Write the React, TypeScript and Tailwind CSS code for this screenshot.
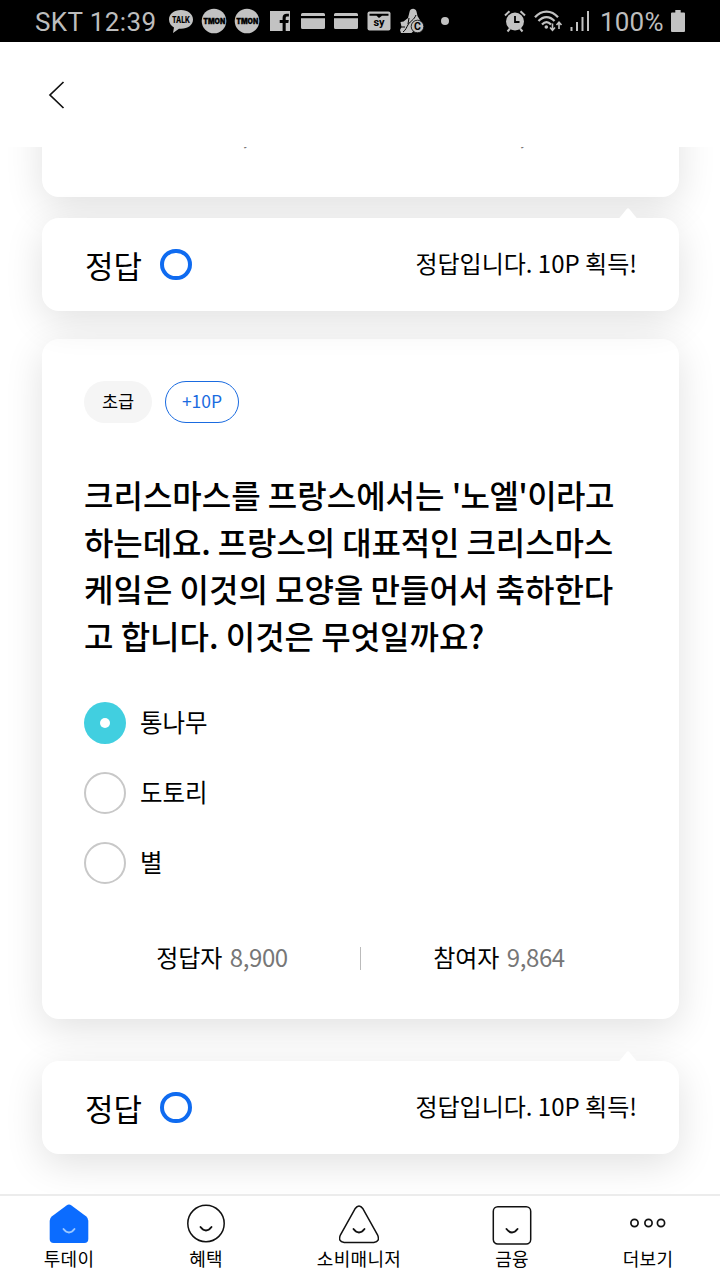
import React from 'react';

const Slot: React.FC<{ children: React.ReactNode }> = ({ children }) => (
  <span className="w-[33px] h-[42px] flex items-center justify-center shrink-0">{children}</span>
);

const TmonIcon = () => (
  <svg width="26" height="26" viewBox="0 0 26 26" className="overflow-visible">
    <circle cx="13" cy="13" r="12.3" fill="#c2c2c2" />
    <text x="2.200" y="16" textLength="22" lengthAdjust="spacingAndGlyphs" fontSize="7.500" fontWeight="900" fontFamily="Inter, sans-serif" fill="#000" stroke="#000" strokeWidth="0.300">
      TMON
    </text>
  </svg>
);

const CardIcon = () => (
  <svg width="24" height="18" viewBox="0 0 24 18">
    <path d="M1.500 1h21a1.500 1.500 0 0 1 1.500 1.500V4H0V2.500A1.500 1.500 0 0 1 1.500 1zM0 6.300h24v9.200a1.500 1.500 0 0 1-1.500 1.500h-21A1.500 1.500 0 0 1 0 15.500z" fill="#c2c2c2" />
  </svg>
);

const StatusBar = () => (
  <div className="h-[42px] shrink-0 bg-black text-[#bdbdbd] flex items-center font-[Roboto,sans-serif] text-[26px]">
    <span className="pl-[35px] w-[164px] shrink-0 whitespace-nowrap leading-[42px] pt-[2px] tracking-[0.4px]">SKT 12:39</span>
    <Slot>
      <svg width="26" height="26" viewBox="0 0 26 26" className="overflow-visible">
        <path d="M13 2C6 2 1 6 1 11.500c0 3.500 2 6.500 5 8L5 25l6-4.200h2c7 0 12-4 12-9.300S20 2 13 2z" fill="#c2c2c2" />
        <text x="4" y="14.800" textLength="18" lengthAdjust="spacingAndGlyphs" fontSize="8.500" fontWeight="800" fontFamily="Inter, sans-serif" fill="#000">
          TALK
        </text>
      </svg>
    </Slot>
    <Slot><TmonIcon /></Slot>
    <Slot><TmonIcon /></Slot>
    <Slot>
      <svg width="20" height="20" viewBox="0 0 20 20">
        <path d="M0 0h20v20h-4.300v-8h2.600l.5-3h-3.100V7.200c0-1 .4-1.600 1.700-1.600h1.500V2.800c-.4 0-1.300-.1-2.200-.1-2.600 0-4.100 1.400-4.100 4.100V9H9.700v3h2.900v8H0z" fill="#c2c2c2" />
      </svg>
    </Slot>
    <Slot><CardIcon /></Slot>
    <Slot><CardIcon /></Slot>
    <Slot>
      <svg width="24" height="20" viewBox="0 0 24 20" className="overflow-visible">
        <rect x="0.500" y="0.500" width="23" height="19" rx="2" fill="#c2c2c2" />
        <path d="M2.500 2.800h19v2h-6.500L12 7 9.500 4.800h-7z" fill="#000" />
        <text x="12" y="15" textAnchor="middle" fontSize="11" fontWeight="700" fontFamily="Roboto, sans-serif" fill="#000">
          sy
        </text>
      </svg>
    </Slot>
    <Slot>
      <svg width="26" height="26" viewBox="0 0 26 26" className="overflow-visible">
        <path d="M10.500 4c.5-4 6-4.500 7-.500l1 4.500 3 5-7 10-2 2H2l-1-3 1.500-3L1.500 14l3-.500L9 10z" fill="#c2c2c2" />
        <path d="M17 7c-2 5-5.500 6-7.500 9S7 22 4 24M10 10l-1 6M2 19l4 0" fill="none" stroke="#000" strokeWidth="1" />
        <circle cx="18.500" cy="18.500" r="6.300" fill="#c2c2c2" stroke="#000" strokeWidth="0.800" />
        <text x="18.500" y="22.300" textAnchor="middle" fontSize="10.500" fontWeight="700" fontFamily="Roboto, sans-serif" fill="#000">
          C
        </text>
      </svg>
    </Slot>
    <Slot>
      <span className="size-2 rounded-full bg-[#c2c2c2]" />
    </Slot>

    <div className="ml-auto pr-[35px] flex items-center">
      <svg width="24" height="24" viewBox="0 0 24 24" className="mr-[7px]">
        <circle cx="12" cy="12.500" r="9" fill="#c2c2c2" />
        <path d="M2 6.500 6.500 2.200M22 6.500l-4.500-4.300M4.500 22.500 7 19.500M19.500 22.500 17 19.500" stroke="#c2c2c2" strokeWidth="2" />
        <path d="M12 7v6h4.500" fill="none" stroke="#000" strokeWidth="1.800" />
      </svg>
      <svg width="30" height="24" viewBox="0 0 30 24" className="mr-[6px]">
        <g fill="none" stroke="#c2c2c2" strokeWidth="2.200">
          <path d="M1 8.200c6.500-7.500 16.500-7.500 23 0" />
          <path d="M4.500 12c4.800-5.200 11.200-5.200 16 0" />
          <path d="M8 15.500c3-3.200 6-3.200 9 0" />
          <path d="M18.500 14.500v6.500M16 18.500l2.500 2.700 2.500-2.700M25 20v-6.500M22.500 16l2.500-2.700 2.500 2.700" strokeWidth="1.600" />
        </g>
        <circle cx="12.300" cy="18" r="1.800" fill="#c2c2c2" />
      </svg>
      <svg width="20" height="22" viewBox="0 0 20 22" className="mr-[10px]">
        <path d="M0.500 17h2v4h-2zM6 12h2v9H6zM11.500 7h2v14h-2zM17 1h2v20h-2z" fill="#c2c2c2" />
      </svg>
      <span className="leading-[42px] pt-[2px] w-[71px] whitespace-nowrap tracking-[0.2px]">100%</span>
      <svg width="14" height="22" viewBox="0 0 14 22">
        <path d="M4.300 0h5.400v2.500H13a1 1 0 0 1 1 1V21a1 1 0 0 1-1 1H1a1 1 0 0 1-1-1V3.500a1 1 0 0 1 1-1h3.300z" fill="#c2c2c2" />
      </svg>
    </div>
  </div>
);

// Winner / participant counts shown at the foot of each quiz card
const Stats: React.FC<{ correct: string; total: string }> = ({ correct, total }) => (
  <div className="flex items-end h-9 text-[24px] leading-9 shrink-0">
    <div className="flex-1 text-center pb-px">
      정답자 <span className="ml-[2px] text-[#777] tracking-[-0.4px]">{correct}</span>
    </div>
    <div className="w-px h-[23px] mb-[6px] bg-[#bbb]" />
    <div className="flex-1 text-center pb-px">
      참여자 <span className="ml-[2px] text-[#777] tracking-[-0.4px]">{total}</span>
    </div>
  </div>
);

const AnswerCard = () => (
  <div className="relative h-[93px] shrink-0 rounded-[17px] bg-white shadow-[0_10px_38px_rgba(0,0,0,0.12)] flex items-center justify-between px-[42px]">
    <svg width="20" height="11" viewBox="0 0 20 11" className="absolute -top-[10px] right-[41px]">
      <path d="M0.500 11 8.500 1.200q1.500-1.800 3 0L19.500 11z" fill="#fff" />
    </svg>
    <div className="flex items-center">
      <span className="text-[31px] leading-[46px] w-[76px] pl-px">정답</span>
      <span className="w-8 h-[31px] rounded-full border-4 border-[#0f6bf0]" />
    </div>
    <span className="text-[24px] leading-9 pb-[3px] whitespace-nowrap">정답입니다. 10P 획득!</span>
  </div>
);

const options = [
  { label: '통나무', checked: true },
  { label: '도토리', checked: false },
  { label: '별', checked: false },
];

const Smile: React.FC<{ y: number; color?: string }> = ({ y, color = '#111' }) => (
  <path d={`M14.500 ${y}q5.500 7 11 0`} fill="none" stroke={color} strokeWidth="1.900" strokeLinecap="round" />
);

const tabs = [
  {
    label: '투데이',
    width: 'w-[138px]',
    icon: (
      <>
        <path d="M17.500 2.500q2.500-1.800 5 0L37 13.300q2.300 1.800 2.300 4.500V36q0 4-4 4H4.700q-4 0-4-4V17.800q0-2.700 2.300-4.500z" fill="#0b6cff" />
        <Smile y={26} color="#9cc8ff" />
      </>
    ),
  },
  {
    label: '혜택',
    width: 'w-[136px]',
    icon: (
      <>
        <circle cx="20" cy="20.500" r="18.200" fill="none" stroke="#111" strokeWidth="1.500" />
        <Smile y={24} />
      </>
    ),
  },
  {
    label: '소비매니저',
    width: 'w-[170px]',
    icon: (
      <>
        <path d="M16 5.800q4-5.700 8 0l14.500 26q3 6.800-3.700 7.800H5.200q-6.700-1-3.700-7.800z" fill="none" stroke="#111" strokeWidth="1.500" />
        <Smile y={26} />
      </>
    ),
  },
  {
    label: '금융',
    width: 'w-[136px]',
    icon: (
      <>
        <rect x="1.300" y="3.700" width="37.400" height="37.400" rx="4.500" fill="none" stroke="#111" strokeWidth="1.500" />
        <Smile y={26} />
      </>
    ),
  },
  {
    label: '더보기',
    width: 'w-[136px]',
    icon: (
      <g fill="none" stroke="#111" strokeWidth="1.700">
        <circle cx="6.500" cy="20" r="3.600" />
        <circle cx="20.500" cy="20" r="3.600" />
        <circle cx="33" cy="20" r="3.600" />
      </g>
    ),
  },
];

export default function App() {
  return (
    <div className="w-[720px] h-[1280px] overflow-hidden flex flex-col bg-white text-black font-['Noto_Sans_CJK_KR',sans-serif]">
      <StatusBar />

      <header className="h-[105px] shrink-0 flex items-center pl-12">
        <svg width="18" height="30" viewBox="0 0 18 30" fill="none" stroke="#111" strokeWidth="1.700">
          <path d="M15.500 2 2 15l13.500 13" />
        </svg>
      </header>

      <main className="h-[1047px] shrink-0 overflow-hidden flex flex-col pl-[42px] pr-[41px]">
        {/* Previous question, scrolled out except for its foot */}
        <div className="-mt-[100px] h-[150px] shrink-0 rounded-[17px] bg-white shadow-[0_10px_38px_rgba(0,0,0,0.12)] flex flex-col justify-end px-[42px] pb-[44px] mb-[21px]">
          <Stats correct="8,900" total="9,864" />
        </div>

        <AnswerCard />

        <section className="mt-7 mb-[42px] h-[680px] shrink-0 rounded-[17px] bg-white shadow-[0_10px_38px_rgba(0,0,0,0.12)] flex flex-col px-[42px] pt-[42px] pb-[43px]">
          <div className="flex gap-[13px] text-[17.500px]">
            <span className="w-[68px] h-[42px] pb-[2px] rounded-full bg-[#f5f5f5] flex items-center justify-center">초급</span>
            <span className="w-[74px] h-[42px] pb-[2px] rounded-full border border-[#1a6be0] text-[#1a6be0] flex items-center justify-center">
              +10P
            </span>
          </div>

          <h1 className="mt-[48px] text-[32px] leading-[47px] font-medium whitespace-nowrap">
            크리스마스를 프랑스에서는 <span className="tracking-[-0.600px]">'노엘'이라고</span>
            <br />
            <span className="tracking-[-0.120px]">하는데요. 프랑스의 대표적인 크리스마스</span>
            <br />
            케잌은 이것의 모양을 만들어서 축하한다
            <br />
            고 합니다. 이것은 무엇일까요?
          </h1>

          <ul className="mt-[43px] flex flex-col gap-7">
            {options.map((option) => (
              <li key={option.label} className="flex items-center gap-[14px] h-[42px] text-[24.500px]">
                {option.checked ? (
                  <span className="size-[42px] rounded-full bg-[#41cfe0] flex items-center justify-center">
                    <span className="size-[10px] rounded-full bg-white" />
                  </span>
                ) : (
                  <span className="size-[42px] rounded-full border-2 border-[#c8c8c8]" />
                )}
                <span className="pb-[2px]">{option.label}</span>
              </li>
            ))}
          </ul>

          <div className="mt-auto">
            <Stats correct="8,900" total="9,864" />
          </div>
        </section>

        <AnswerCard />
      </main>

      <nav className="h-[86px] shrink-0 border-t-2 border-[#ececec] bg-white flex">
        {tabs.map((tab) => (
          <div key={tab.label} className={`${tab.width} flex flex-col items-center pt-[7px]`}>
            <svg width="40" height="42" viewBox="0 0 40 42">
              {tab.icon}
            </svg>
            <span className="text-[18px] leading-[26px] tracking-[0.3px] whitespace-nowrap">{tab.label}</span>
          </div>
        ))}
      </nav>
    </div>
  );
}
